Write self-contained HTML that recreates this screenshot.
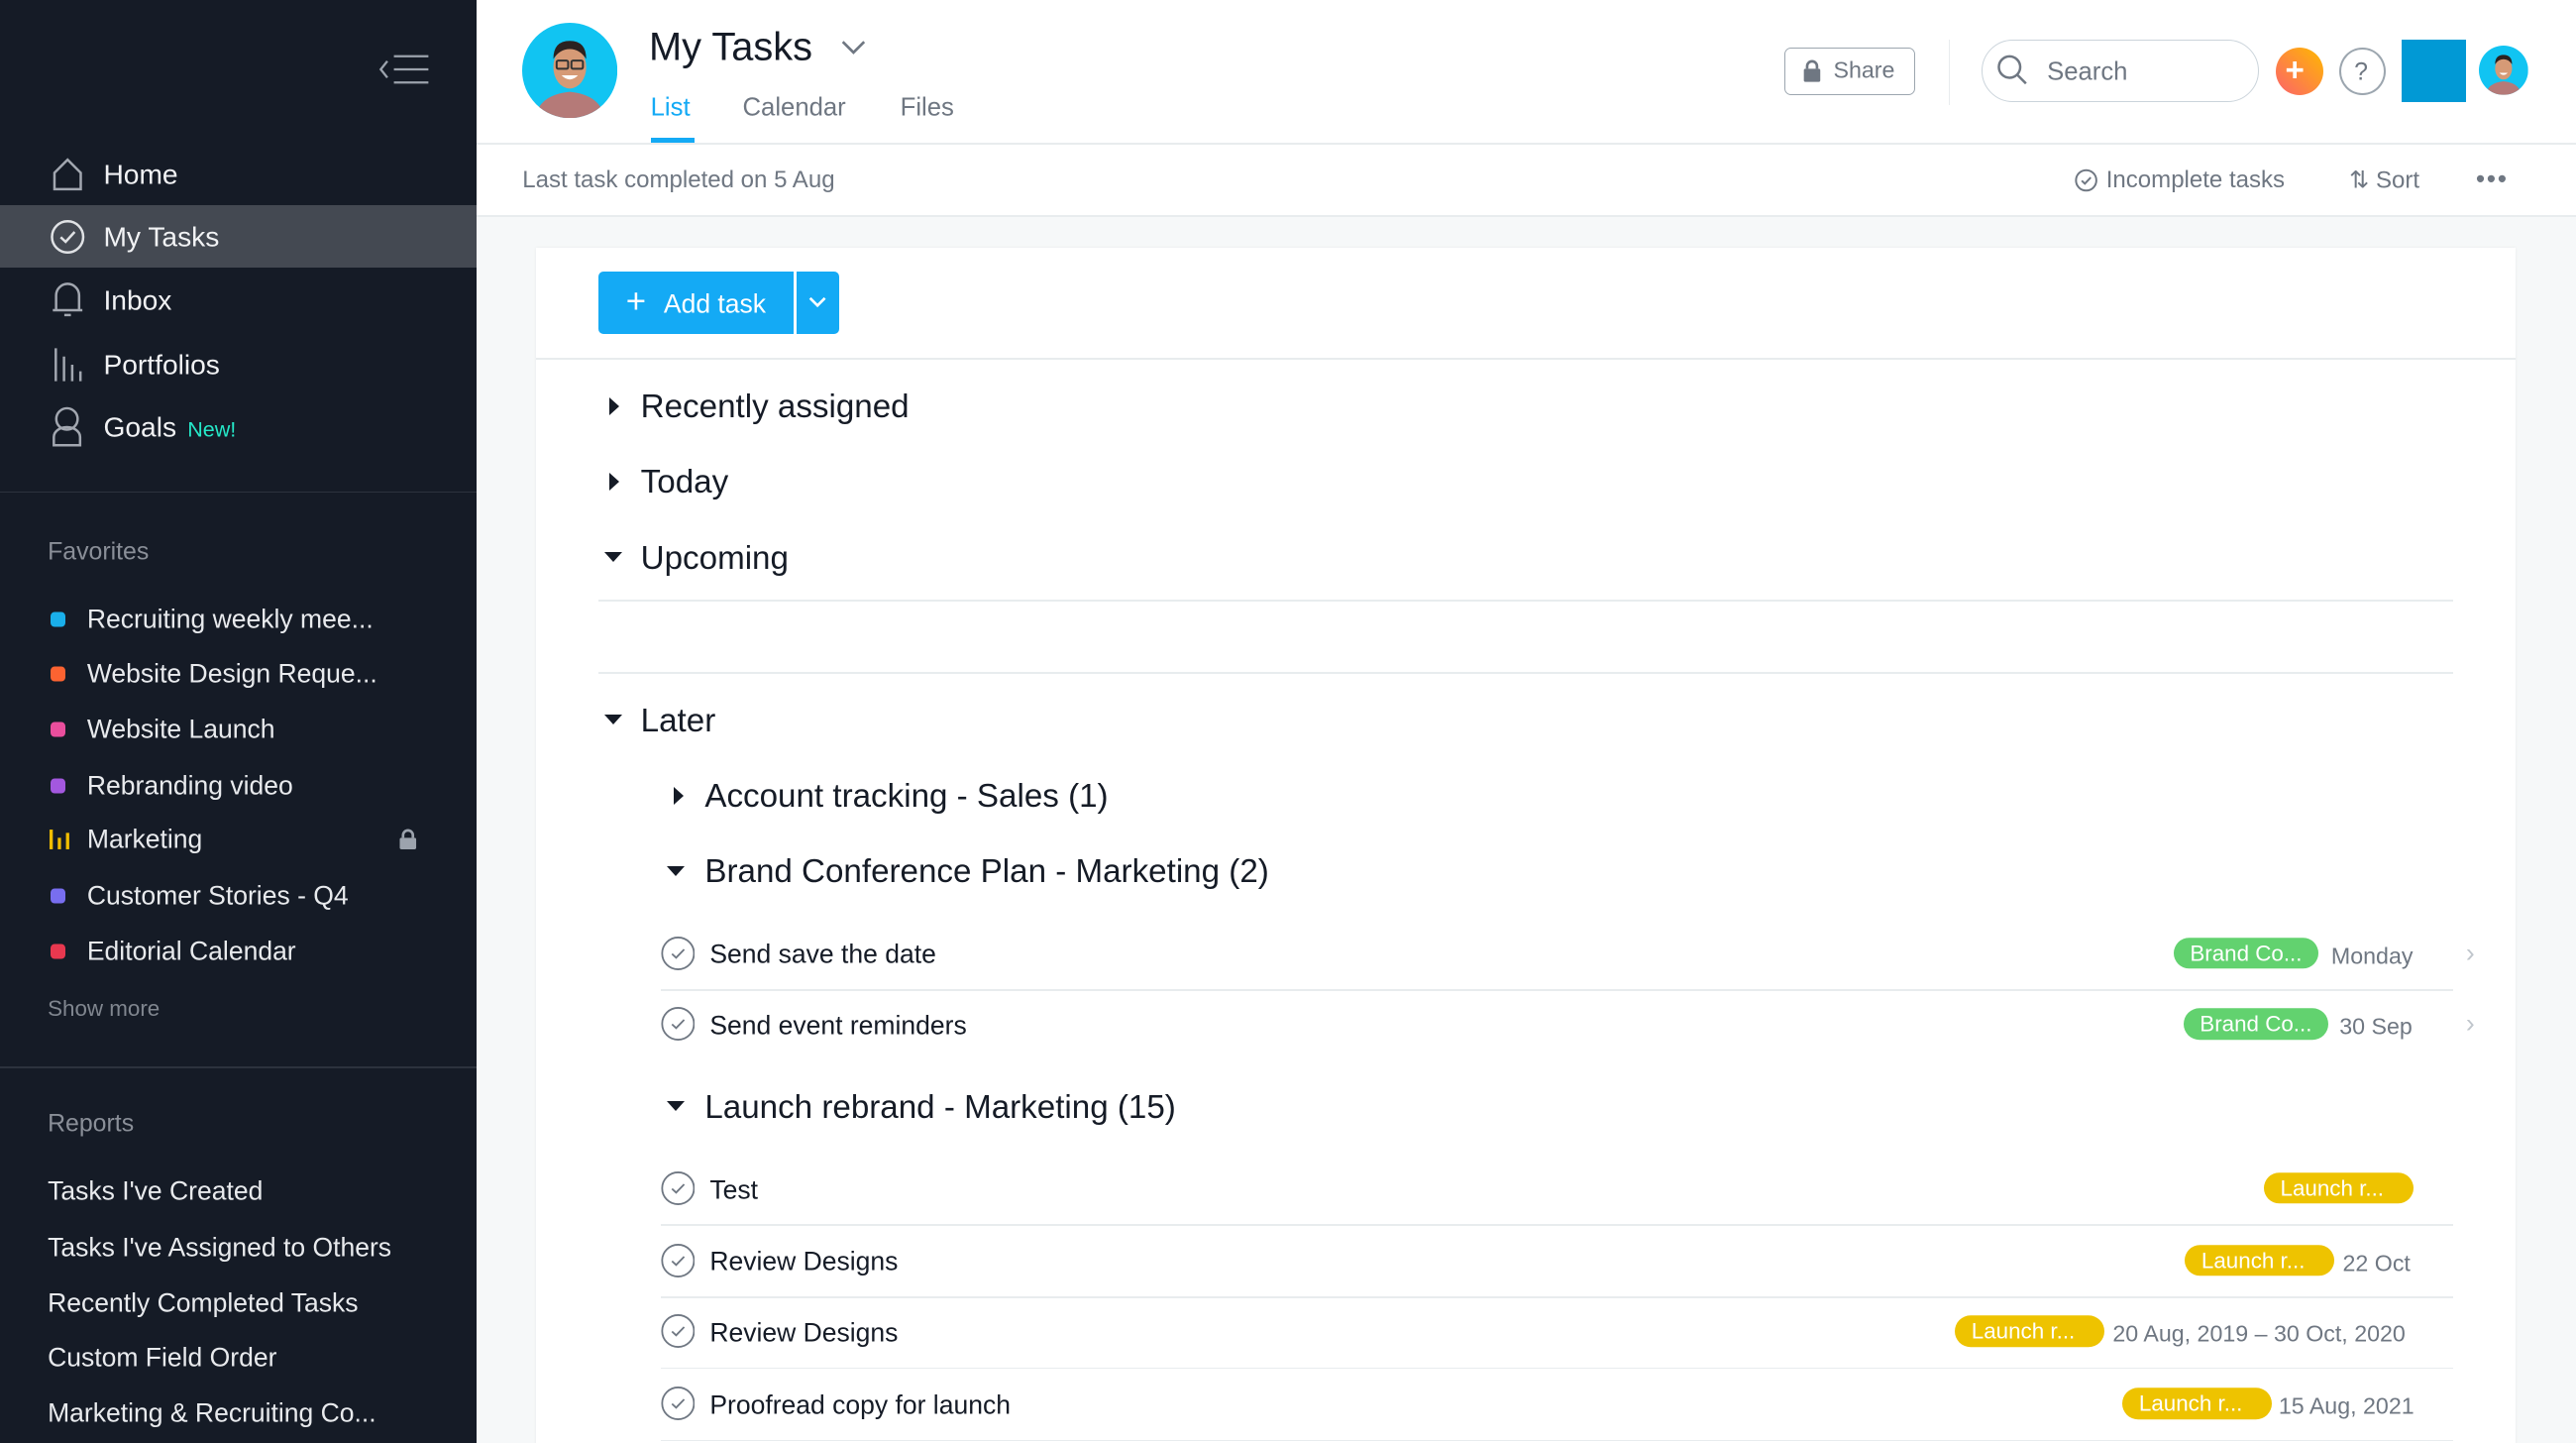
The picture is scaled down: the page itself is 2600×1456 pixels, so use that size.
<!DOCTYPE html>
<html><head><meta charset="utf-8">
<style>
*{margin:0;padding:0;box-sizing:border-box}
html,body{width:2600px;height:1456px;overflow:hidden;background:#f6f8f9}
#w{zoom:1.65816;width:1568px;height:878px;position:relative;font-family:"Liberation Sans",Arial,sans-serif;overflow:hidden}
.a{position:absolute;white-space:nowrap;transform:translateY(-50%)}
.side{position:absolute;left:0;top:0;width:290px;height:878px;background:#151b26}
.nav{color:#f1f2f4;font-size:17px}
.fav{color:#e8eaed;font-size:16px}
.dot{position:absolute;width:9px;height:9px;border-radius:2.5px;transform:translateY(-50%)}
.hd{color:#151b26;font-size:20px}
.tk{color:#151b26;font-size:16px}
.line{position:absolute;height:1px;background:#e8ecee}
.tag{position:absolute;height:19px;border-radius:10px;color:#fff;font-size:13.5px;line-height:19px;padding:0 10px;transform:translateY(-50%)}
.g{background:#62d26f}.y{background:#eec300}
.dt{color:#6f7782;font-size:14px}
.tri{position:absolute;width:0;height:0;transform:translateY(-50%)}
.tr{border-top:5.5px solid transparent;border-bottom:5.5px solid transparent;border-left:6.5px solid #151b26}
.td{border-left:6px solid transparent;border-right:6px solid transparent;border-top:6.5px solid #151b26}
</style></head><body><div id="w">

<div class="side">
  <svg class="a" style="left:230px;top:42px" width="32" height="20" viewBox="0 0 32 20" fill="none" stroke="#9ca3ad" stroke-width="1.4"><path d="M6 5 L2 10 L6 15"/><path d="M10 2 H31 M10 10 H31 M10 18 H31"/></svg>
  <svg class="a" style="left:30px;top:106px" width="22" height="22" viewBox="0 0 22 22" fill="none" stroke="#a2a7b0" stroke-width="1.5"><path d="M3 10 L11 2 L19 10 V20 H3 Z"/></svg>
  <div class="a nav" style="left:63px;top:106px">Home</div>
  <div style="position:absolute;left:0;top:125px;width:290px;height:38px;background:#444952"></div>
  <svg class="a" style="left:30px;top:144px" width="22" height="22" viewBox="0 0 22 22" fill="none" stroke="#e0e2e5" stroke-width="1.5"><circle cx="11" cy="11" r="9.5"/><path d="M6.8 11.2 L9.8 14 L15.3 8"/></svg>
  <div class="a nav" style="left:63px;top:144px">My Tasks</div>
  <svg class="a" style="left:30px;top:183px" width="22" height="24" viewBox="0 0 22 24" fill="none" stroke="#a2a7b0" stroke-width="1.5"><path d="M4 18 V9 A7 7 0 0 1 18 9 V18 Z M2 18 H20 M9 21 H13"/></svg>
  <div class="a nav" style="left:63px;top:183px">Inbox</div>
  <svg class="a" style="left:32px;top:222px" width="20" height="22" viewBox="0 0 20 22" fill="none" stroke="#a2a7b0" stroke-width="1.5"><path d="M2 1 V21 M7 6 V21 M12 11 V21 M17 15 V21"/></svg>
  <div class="a nav" style="left:63px;top:222px">Portfolios</div>
  <svg class="a" style="left:31px;top:260px" width="20" height="26" viewBox="0 0 20 26" fill="none" stroke="#a2a7b0" stroke-width="1.5"><circle cx="10" cy="8" r="6.5"/><path d="M2 24 V19 A8 6 0 0 1 18 19 V24 Z"/></svg>
  <div class="a nav" style="left:63px;top:260px">Goals <span style="color:#25e8c8;font-size:13px;margin-left:2px">New!</span></div>
  <div style="position:absolute;left:0;top:299px;width:290px;height:1px;background:#2c323d"></div>
  <div class="a" style="left:29px;top:336px;color:#8a8f98;font-size:15px">Favorites</div>
  <div class="dot" style="left:31px;top:377px;background:#1aafea"></div><div class="a fav" style="left:53px;top:377px">Recruiting weekly mee...</div>
  <div class="dot" style="left:31px;top:410px;background:#fc6331"></div><div class="a fav" style="left:53px;top:410px">Website Design Reque...</div>
  <div class="dot" style="left:31px;top:444px;background:#ea4e9d"></div><div class="a fav" style="left:53px;top:444px">Website Launch</div>
  <div class="dot" style="left:31px;top:478px;background:#a358df"></div><div class="a fav" style="left:53px;top:478px">Rebranding video</div>
  <svg class="a" style="left:30px;top:511px" width="12" height="12" viewBox="0 0 12 12" fill="#f1bd00"><rect x="0" y="0" width="2" height="12"/><rect x="5" y="5" width="2" height="7"/><rect x="10" y="2" width="2" height="10"/></svg>
  <div class="a fav" style="left:53px;top:511px">Marketing</div>
  <svg class="a" style="left:242px;top:511px" width="13" height="14" viewBox="0 0 13 14"><path d="M3.5 6 V4.5 A3 3 0 0 1 9.5 4.5 V6" fill="none" stroke="#9ca3ad" stroke-width="1.6"/><rect x="1.5" y="6" width="10" height="7" rx="1" fill="#9ca3ad"/></svg>
  <div class="dot" style="left:31px;top:545px;background:#786ef0"></div><div class="a fav" style="left:53px;top:545px">Customer Stories - Q4</div>
  <div class="dot" style="left:31px;top:579px;background:#e8384f"></div><div class="a fav" style="left:53px;top:579px">Editorial Calendar</div>
  <div class="a" style="left:29px;top:614px;color:#80868f;font-size:13.5px">Show more</div>
  <div style="position:absolute;left:0;top:649px;width:290px;height:1px;background:#2c323d"></div>
  <div class="a" style="left:29px;top:684px;color:#8a8f98;font-size:15px">Reports</div>
  <div class="a fav" style="left:29px;top:725px">Tasks I've Created</div>
  <div class="a fav" style="left:29px;top:759px">Tasks I've Assigned to Others</div>
  <div class="a fav" style="left:29px;top:793px">Recently Completed Tasks</div>
  <div class="a fav" style="left:29px;top:826px">Custom Field Order</div>
  <div class="a fav" style="left:29px;top:860px">Marketing &amp; Recruiting Co...</div>
</div>

<!-- header -->
<div style="position:absolute;left:290px;top:0;width:1278px;height:131px;background:#fff"></div>
<svg style="position:absolute;left:318px;top:14px" width="58" height="58" viewBox="0 0 58 58"><defs><clipPath id="c1"><circle cx="29" cy="29" r="29"/></clipPath></defs><g clip-path="url(#c1)"><rect width="58" height="58" fill="#11c4f2"/><path d="M8 58 Q10 44 29 42 Q48 44 50 58Z" fill="#b57a78"/><ellipse cx="29" cy="27" rx="10" ry="13" fill="#d69a76"/><path d="M19 22 Q19 11 29 11 Q39 11 39 22 Q35 16 29 16 Q23 16 19 22Z" fill="#2b2220"/><rect x="21" y="23" width="7" height="5" rx="1" fill="none" stroke="#333" stroke-width="1.2"/><rect x="30" y="23" width="7" height="5" rx="1" fill="none" stroke="#333" stroke-width="1.2"/><path d="M24 32 Q29 37 34 32Z" fill="#fff"/></g></svg>
<div class="a" style="left:395px;top:29px;font-size:24px;color:#151b26">My Tasks</div>
<svg class="a" style="left:512px;top:29px" width="15" height="9" viewBox="0 0 15 9" fill="none" stroke="#6f7782" stroke-width="1.6"><path d="M1 1 L7.5 7.5 L14 1"/></svg>
<div class="a" style="left:396px;top:66px;font-size:15.5px;color:#14aaf5">List</div>
<div style="position:absolute;left:396px;top:84px;width:27px;height:3px;background:#14aaf5"></div>
<div class="a" style="left:452px;top:66px;font-size:15.5px;color:#6f7782">Calendar</div>
<div class="a" style="left:548px;top:66px;font-size:15.5px;color:#6f7782">Files</div>
<div style="position:absolute;left:290px;top:87px;width:1278px;height:1px;background:#e8ecee"></div>

<div style="position:absolute;left:1086px;top:29px;width:80px;height:29px;border:1px solid #9ca6af;border-radius:4px"></div>
<svg class="a" style="left:1097px;top:43px" width="12" height="14" viewBox="0 0 12 14"><path d="M3 6 V4.5 A3 3 0 0 1 9 4.5 V6" fill="none" stroke="#6f7782" stroke-width="1.6"/><rect x="1" y="6" width="10" height="8" rx="1" fill="#6f7782"/></svg>
<div class="a" style="left:1116px;top:43px;font-size:14px;color:#6f7782">Share</div>
<div style="position:absolute;left:1186px;top:24px;width:1px;height:40px;background:#e8ecee"></div>
<div style="position:absolute;left:1206px;top:24px;width:169px;height:38px;border:1px solid #cbd4db;border-radius:19px"></div>
<svg class="a" style="left:1215px;top:43px" width="20" height="20" viewBox="0 0 20 20" fill="none" stroke="#6f7782" stroke-width="1.5"><circle cx="8" cy="8" r="6.5"/><path d="M12.7 12.7 L18 18"/></svg>
<div class="a" style="left:1246px;top:44px;font-size:15.5px;color:#6f7782">Search</div>
<div style="position:absolute;left:1385px;top:29px;width:29px;height:29px;border-radius:50%;background:linear-gradient(45deg,#fc636b,#ffb900)"></div>
<div class="a" style="left:1391px;top:43px;color:#fff;font-size:20px;font-weight:bold;line-height:1">+</div>
<div style="position:absolute;left:1424px;top:29px;width:28px;height:29px;border-radius:50%;border:1.3px solid #9ca6af"></div>
<div class="a" style="left:1433px;top:44px;color:#6f7782;font-size:15px">?</div>
<div style="position:absolute;left:1462px;top:24px;width:39px;height:38px;background:#0199d5"></div>
<svg style="position:absolute;left:1509px;top:28px" width="30" height="30" viewBox="0 0 58 58"><defs><clipPath id="c2"><circle cx="29" cy="29" r="29"/></clipPath></defs><g clip-path="url(#c2)"><rect width="58" height="58" fill="#11c4f2"/><path d="M8 58 Q10 44 29 42 Q48 44 50 58Z" fill="#b57a78"/><ellipse cx="29" cy="27" rx="10" ry="13" fill="#d69a76"/><path d="M19 22 Q19 11 29 11 Q39 11 39 22 Q35 16 29 16 Q23 16 19 22Z" fill="#2b2220"/><path d="M24 32 Q29 37 34 32Z" fill="#fff"/></g></svg>

<div class="a" style="left:318px;top:110px;font-size:14.5px;color:#6f7782">Last task completed on 5 Aug</div>
<svg class="a" style="left:1263px;top:110px" width="14" height="14" viewBox="0 0 14 14" fill="none" stroke="#6f7782" stroke-width="1.2"><circle cx="7" cy="7" r="6.2"/><path d="M4.3 7.2 L6.2 9 L9.8 5.2"/></svg>
<div class="a" style="left:1282px;top:110px;font-size:14.5px;color:#6f7782">Incomplete tasks</div>
<div class="a" style="left:1430px;top:110px;font-size:14.5px;color:#6f7782">⇅ Sort</div>
<div class="a" style="left:1507px;top:109px;font-size:16px;color:#6f7782;letter-spacing:1px">•••</div>
<div style="position:absolute;left:290px;top:131px;width:1278px;height:1px;background:#e8ecee"></div>

<!-- card -->
<div style="position:absolute;left:326px;top:151px;width:1205px;height:740px;background:#fff;box-shadow:0 0 2px rgba(0,0,0,.06)"></div>
<div style="position:absolute;left:364px;top:165px;width:147px;height:38px;background:#14aaf5;border-radius:3px"></div>
<div style="position:absolute;left:483px;top:165px;width:2px;height:38px;background:#fff"></div>
<div class="a" style="left:381px;top:184px;color:#fff;font-size:21px;line-height:1">+</div>
<div class="a" style="left:404px;top:185px;color:#fff;font-size:16px">Add task</div>
<svg class="a" style="left:492px;top:184px" width="11" height="7" viewBox="0 0 11 7" fill="none" stroke="#fff" stroke-width="1.6"><path d="M1 1 L5.5 5.5 L10 1"/></svg>
<div class="line" style="left:326px;top:218px;width:1205px"></div>

<div class="tri tr" style="left:371px;top:247px"></div><div class="a hd" style="left:390px;top:248px">Recently assigned</div>
<div class="tri tr" style="left:371px;top:293px"></div><div class="a hd" style="left:390px;top:294px">Today</div>
<div class="tri td" style="left:368px;top:339px"></div><div class="a hd" style="left:390px;top:340px">Upcoming</div>
<div class="line" style="left:364px;top:365px;width:1129px"></div>
<div class="line" style="left:364px;top:409px;width:1129px"></div>
<div class="tri td" style="left:368px;top:438px"></div><div class="a hd" style="left:390px;top:439px">Later</div>
<div class="tri tr" style="left:410px;top:484px"></div><div class="a hd" style="left:429px;top:485px">Account tracking - Sales (1)</div>
<div class="tri td" style="left:406px;top:530px"></div><div class="a hd" style="left:429px;top:531px">Brand Conference Plan - Marketing (2)</div>

<!-- tasks -->
<svg class="a" style="left:402px;top:580px" width="21" height="21" viewBox="0 0 21 21" fill="none" stroke="#6f7782" stroke-width="1.1"><circle cx="10.5" cy="10.5" r="9.7"/><path d="M6.8 10.8 L9.3 13.1 L14.2 8.1"/></svg>
<div class="a tk" style="left:432px;top:581px">Send save the date</div>
<div class="tag g" style="left:1323px;top:580px">Brand Co...</div>
<div class="a dt" style="left:1419px;top:582px">Monday</div>
<div class="a" style="left:1501px;top:580px;color:#c0c6cc;font-size:16px">›</div>
<div class="line" style="left:402px;top:602px;width:1091px"></div>

<svg class="a" style="left:402px;top:623px" width="21" height="21" viewBox="0 0 21 21" fill="none" stroke="#6f7782" stroke-width="1.1"><circle cx="10.5" cy="10.5" r="9.7"/><path d="M6.8 10.8 L9.3 13.1 L14.2 8.1"/></svg>
<div class="a tk" style="left:432px;top:624px">Send event reminders</div>
<div class="tag g" style="left:1329px;top:623px">Brand Co...</div>
<div class="a dt" style="left:1424px;top:625px">30 Sep</div>
<div class="a" style="left:1501px;top:623px;color:#c0c6cc;font-size:16px">›</div>

<div class="tri td" style="left:406px;top:673px"></div><div class="a hd" style="left:429px;top:674px">Launch rebrand - Marketing (15)</div>

<svg class="a" style="left:402px;top:723px" width="21" height="21" viewBox="0 0 21 21" fill="none" stroke="#6f7782" stroke-width="1.1"><circle cx="10.5" cy="10.5" r="9.7"/><path d="M6.8 10.8 L9.3 13.1 L14.2 8.1"/></svg>
<div class="a tk" style="left:432px;top:724px">Test</div>
<div class="tag y" style="left:1378px;top:723px;width:91px">Launch r...</div>
<div class="line" style="left:402px;top:745px;width:1091px"></div>

<svg class="a" style="left:402px;top:767px" width="21" height="21" viewBox="0 0 21 21" fill="none" stroke="#6f7782" stroke-width="1.1"><circle cx="10.5" cy="10.5" r="9.7"/><path d="M6.8 10.8 L9.3 13.1 L14.2 8.1"/></svg>
<div class="a tk" style="left:432px;top:768px">Review Designs</div>
<div class="tag y" style="left:1330px;top:767px;width:91px">Launch r...</div>
<div class="a dt" style="left:1426px;top:769px">22 Oct</div>
<div class="line" style="left:402px;top:789px;width:1091px"></div>

<svg class="a" style="left:402px;top:810px" width="21" height="21" viewBox="0 0 21 21" fill="none" stroke="#6f7782" stroke-width="1.1"><circle cx="10.5" cy="10.5" r="9.7"/><path d="M6.8 10.8 L9.3 13.1 L14.2 8.1"/></svg>
<div class="a tk" style="left:432px;top:811px">Review Designs</div>
<div class="tag y" style="left:1190px;top:810px;width:91px">Launch r...</div>
<div class="a dt" style="left:1286px;top:812px">20 Aug, 2019 – 30 Oct, 2020</div>
<div class="line" style="left:402px;top:832px;width:1091px"></div>

<svg class="a" style="left:402px;top:854px" width="21" height="21" viewBox="0 0 21 21" fill="none" stroke="#6f7782" stroke-width="1.1"><circle cx="10.5" cy="10.5" r="9.7"/><path d="M6.8 10.8 L9.3 13.1 L14.2 8.1"/></svg>
<div class="a tk" style="left:432px;top:855px">Proofread copy for launch</div>
<div class="tag y" style="left:1292px;top:854px;width:91px">Launch r...</div>
<div class="a dt" style="left:1387px;top:856px">15 Aug, 2021</div>
<div class="line" style="left:402px;top:876px;width:1091px"></div>

</div></body></html>
